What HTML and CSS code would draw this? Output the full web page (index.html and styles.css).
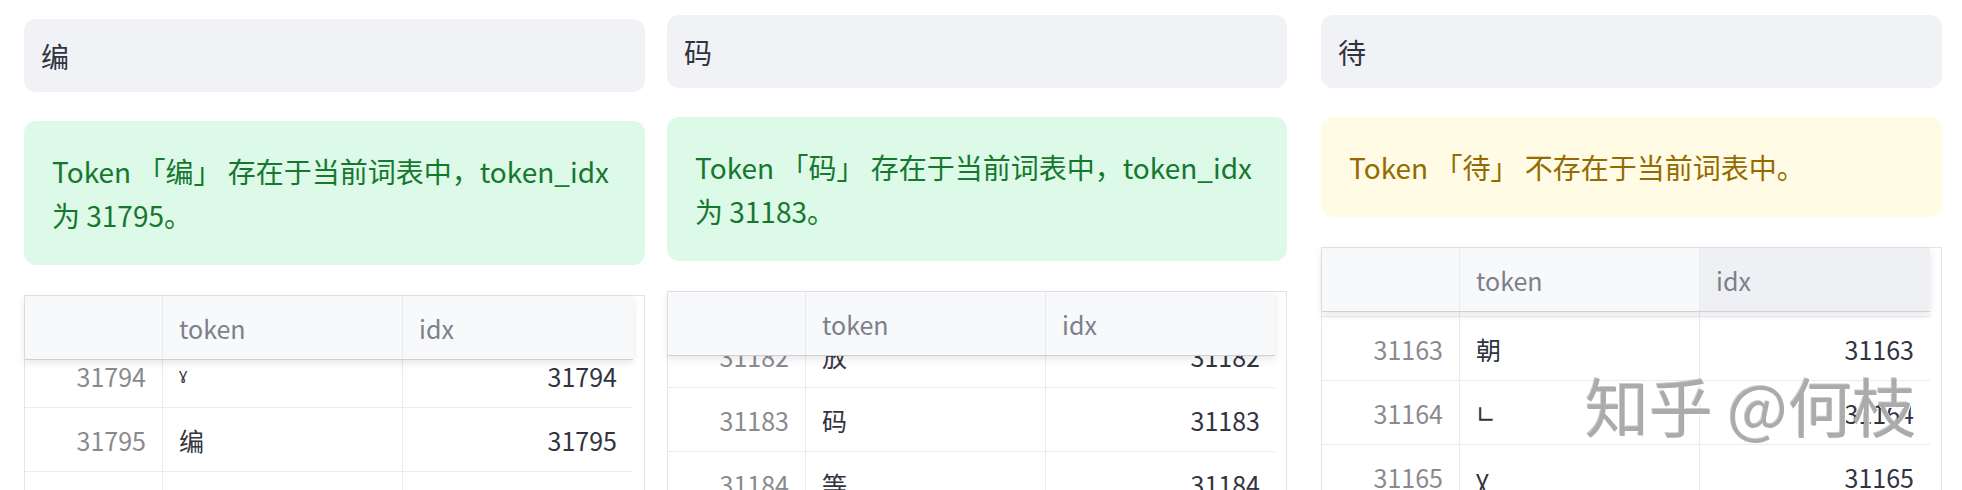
FILE: index.html
```html
<!DOCTYPE html>
<html lang="zh-CN">
<head>
<meta charset="utf-8">
<title>Token 词表查询</title>
<link rel="stylesheet" href="styles.css">
</head>
<body>
<main class="app">
  <section class="col col--first">
    <div class="input">编</div>
    <div class="alert alert--success">Token 「编」 存在于当前词表中，token_idx 为 31795。</div>
    <div class="grid">
      <div class="grid-head">
        <div class="cell cell--index"></div>
        <div class="cell cell--head">token</div>
        <div class="cell cell--head">idx</div>
      </div>
      <div class="grid-body">
        <div class="grid-rows grid-rows--first">
          <div class="row"><div class="cell cell--index">31794</div><div class="cell">ˠ</div><div class="cell cell--num">31794</div></div>
          <div class="row"><div class="cell cell--index">31795</div><div class="cell">编</div><div class="cell cell--num">31795</div></div>
          <div class="row"><div class="cell cell--index">31796</div><div class="cell">跳</div><div class="cell cell--num">31796</div></div>
        </div>
      </div>
    </div>
  </section>

  <section class="col">
    <div class="input">码</div>
    <div class="alert alert--success">Token 「码」 存在于当前词表中，token_idx 为 31183。</div>
    <div class="grid">
      <div class="grid-head">
        <div class="cell cell--index"></div>
        <div class="cell cell--head">token</div>
        <div class="cell cell--head">idx</div>
      </div>
      <div class="grid-body">
        <div class="grid-rows grid-rows--second">
          <div class="row"><div class="cell cell--index">31182</div><div class="cell">放</div><div class="cell cell--num">31182</div></div>
          <div class="row"><div class="cell cell--index">31183</div><div class="cell">码</div><div class="cell cell--num">31183</div></div>
          <div class="row"><div class="cell cell--index">31184</div><div class="cell">等</div><div class="cell cell--num">31184</div></div>
        </div>
      </div>
    </div>
  </section>

  <section class="col col--third">
    <div class="input">待</div>
    <div class="alert alert--warning">Token 「待」 不存在于当前词表中。</div>
    <div class="grid">
      <div class="grid-head">
        <div class="cell cell--index"></div>
        <div class="cell cell--head">token</div>
        <div class="cell cell--head cell--hover">idx</div>
      </div>
      <div class="grid-body">
        <div class="grid-rows grid-rows--third">
          <div class="row"><div class="cell cell--index">31162</div><div class="cell">朝</div><div class="cell cell--num">31162</div></div>
          <div class="row"><div class="cell cell--index">31163</div><div class="cell">朝</div><div class="cell cell--num">31163</div></div>
          <div class="row"><div class="cell cell--index">31164</div><div class="cell cell--small">∟</div><div class="cell cell--num">31164</div></div>
          <div class="row"><div class="cell cell--index">31165</div><div class="cell">ɣ</div><div class="cell cell--num">31165</div></div>
        </div>
      </div>
    </div>
  </section>

  <div class="watermark">知乎 @何枝</div>
</main>
</body>
</html>
```

FILE: styles.css
```css
html, body {
  margin: 0;
  padding: 0;
  height: 100%;
  overflow: hidden;
  background: #ffffff;
}

body {
  font-family: "Noto Sans CJK SC", "Noto Sans", sans-serif;
  color: #31333f;
}

.app {
  display: flex;
  align-items: flex-start;
  gap: 22px;
  padding: 15px 0 0 24px;
}

.col {
  width: 620px;
  display: flex;
  flex-direction: column;
  flex: none;
}

.col--first {
  width: 621px;
  padding-top: 4px;
}

.col--third {
  width: 621px;
  margin-left: 12px;
}

.input {
  height: 73px;
  box-sizing: border-box;
  background: #f0f2f6;
  border-radius: 12px;
  padding-left: 17px;
  display: flex;
  align-items: center;
  font-size: 28px;
  color: #31333f;
}

.alert {
  margin-top: 29px;
  border-radius: 12px;
  padding: 28px;
  font-size: 28px;
  line-height: 44px;
}

.alert--success {
  background: #ddf9e8;
  color: #16772f;
}

.alert--warning {
  background: #fffbe5;
  color: #946b00;
}

.grid {
  margin-top: 30px;
  border: 1px solid #e3e4e8;
  border-bottom: none;
  padding-right: 11px;
  height: 400px;
  display: flex;
  flex-direction: column;
  font-size: 25px;
}

.grid-head,
.row {
  display: grid;
  grid-template-columns: 138px 240px 230px;
}

.grid-head {
  height: 64px;
  box-sizing: border-box;
  background: #f8f9fb;
  border-bottom: 1px solid #cfd0d4;
  box-shadow: 0 3px 8px rgba(0, 0, 0, 0.10);
  position: relative;
  z-index: 1;
  flex: none;
}

.grid-body {
  flex: 1;
  overflow: hidden;
}

.grid-rows--first { margin-top: -16px; }
.grid-rows--second { margin-top: -32px; }
.grid-rows--third { margin-top: -59px; }

.row {
  height: 64px;
  box-sizing: border-box;
  border-bottom: 1px solid #ebebee;
}

.cell {
  display: flex;
  align-items: center;
  padding: 0 16px;
  border-right: 1px solid #ebebee;
  white-space: nowrap;
  overflow: hidden;
}

.cell:last-child {
  border-right: none;
}

.cell--head {
  color: #7d808a;
}

.cell--hover {
  background: #eff0f4;
}

.cell--index {
  justify-content: flex-end;
  color: #898a90;
}

.cell--num {
  justify-content: flex-end;
}

.cell--small {
  font-family: "DejaVu Sans", sans-serif;
  font-size: 24px;
  padding-top: 4px;
}

.watermark {
  position: absolute;
  left: 1585px;
  top: 372px;
  font-size: 64px;
  line-height: 1;
  color: #ababab;
  text-shadow: 1px 1px 0 rgba(255, 255, 255, 0.95), -1px -1px 0 rgba(90, 90, 90, 0.3);
  white-space: nowrap;
  pointer-events: none;
}
```
